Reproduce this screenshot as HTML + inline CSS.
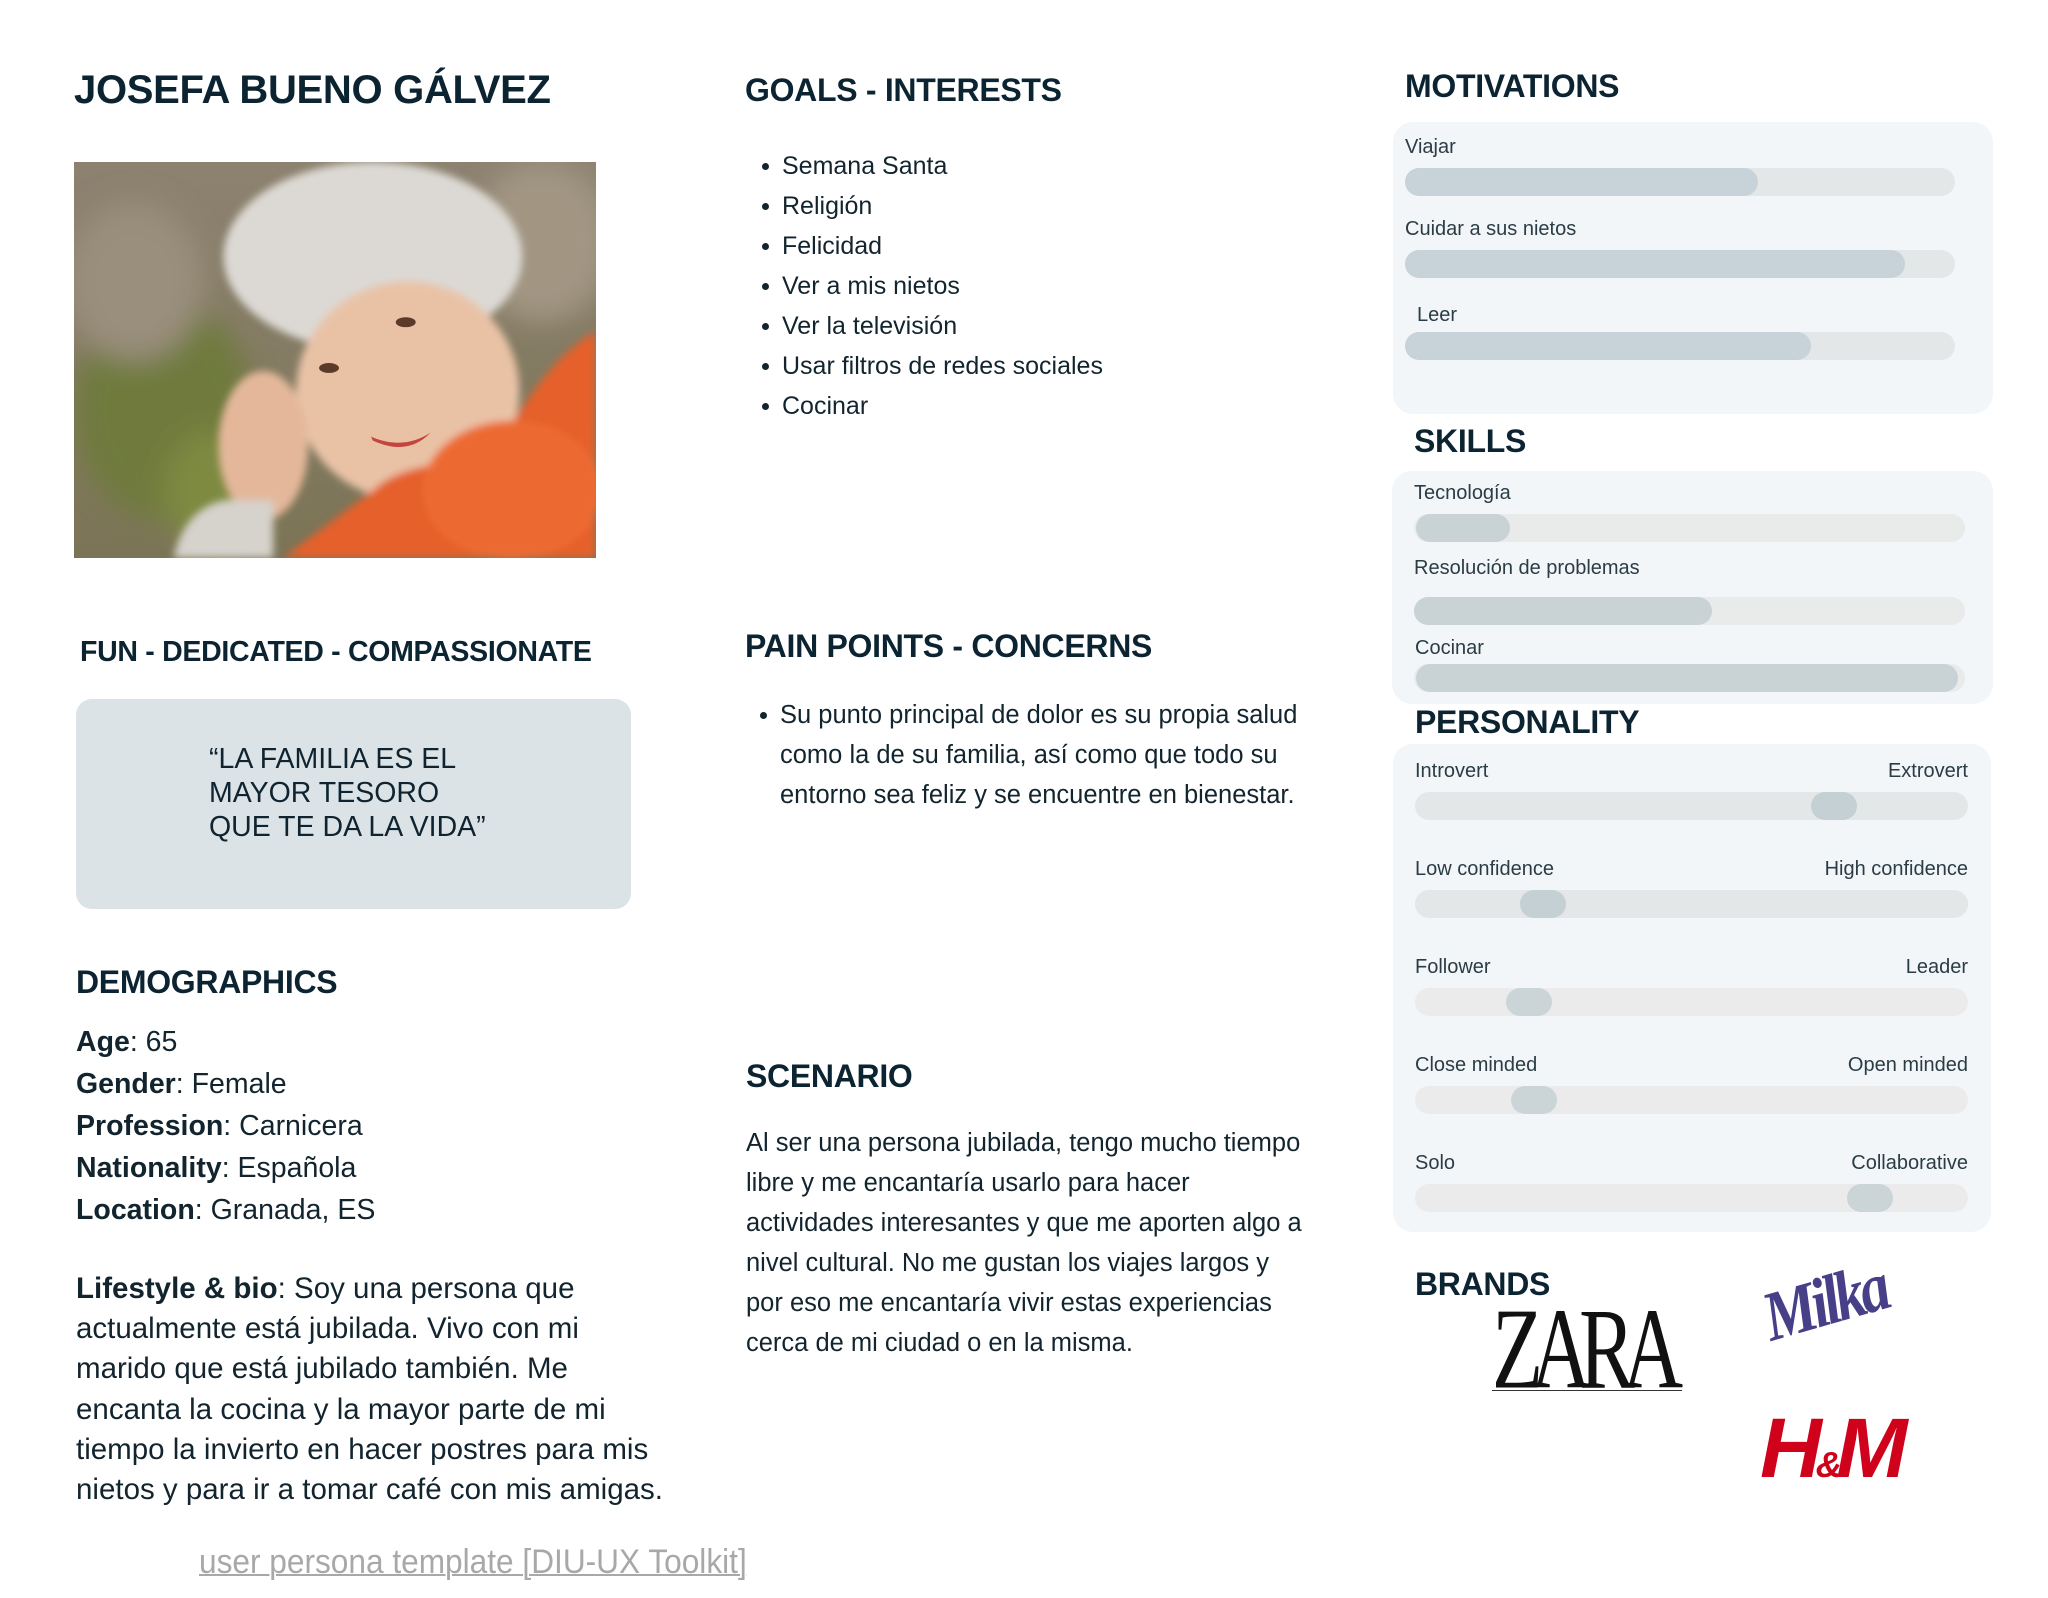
<!DOCTYPE html>
<html><head><meta charset="utf-8">
<style>
*{margin:0;padding:0;box-sizing:border-box}
body{width:2048px;height:1598px;background:#fff;position:relative;overflow:hidden;font-family:"Liberation Sans",Arial,sans-serif;color:#0f2430}
.a{position:absolute;white-space:nowrap}
h1,h2{position:absolute;white-space:nowrap;font-weight:bold;color:#0c2431;letter-spacing:-0.3px}
h1{font-size:40px}
h2{font-size:32px}
.body{font-size:25px;line-height:40px;color:#12242e}
.card{position:absolute;background:#f2f6f9;border-radius:20px}
.lab{position:absolute;font-size:20px;color:#2b3c45;white-space:nowrap;line-height:24px}
.trk{position:absolute;height:28px;border-radius:14px;background:#e3e7e8}
.fill{position:absolute;left:0;top:0;height:28px;border-radius:14px;background:#c7d3d8}
.knob{position:absolute;top:0;width:46px;height:28px;border-radius:14px;background:#c5d0d4}
ul{list-style:none}
.bl{position:relative}
.bl:before{content:"";position:absolute;left:-20px;top:17px;width:7px;height:7px;border-radius:50%;background:#12242e}
</style></head><body>

<h1 style="left:74px;top:68px">JOSEFA BUENO GÁLVEZ</h1>

<svg class="a" style="left:74px;top:162px" width="522" height="396" viewBox="0 0 524 398" preserveAspectRatio="none">
<defs>
<filter id="b1"><feGaussianBlur stdDeviation="14"/></filter>
<filter id="b2"><feGaussianBlur stdDeviation="4"/></filter>
<linearGradient id="bg" x1="0" y1="0" x2="0" y2="1"><stop offset="0" stop-color="#8d8270"/><stop offset="1" stop-color="#7b7456"/></linearGradient>
</defs>
<rect width="524" height="398" fill="url(#bg)"/>
<g filter="url(#b1)">
<ellipse cx="90" cy="250" rx="90" ry="110" fill="#6f7a3c"/>
<ellipse cx="60" cy="120" rx="70" ry="80" fill="#9a8e7c"/>
<ellipse cx="470" cy="80" rx="70" ry="80" fill="#a29683"/>
<ellipse cx="140" cy="330" rx="50" ry="60" fill="#7e8a41"/>
</g>
<g filter="url(#b2)">
<ellipse cx="300" cy="95" rx="150" ry="95" fill="#dcd9d4"/>
<ellipse cx="335" cy="230" rx="112" ry="110" fill="#e9c2a6"/>
<ellipse cx="190" cy="285" rx="45" ry="75" fill="#e4b79a"/>
<path d="M300 330 Q330 300 420 300 Q470 200 524 170 L524 398 L210 398 Z" fill="#e5612c"/>
<path d="M100 398 Q110 350 150 340 L200 340 L200 398Z" fill="#d6d2cc"/>
<ellipse cx="440" cy="330" rx="90" ry="70" fill="#ec6a31"/>
</g>
<path d="M298 276 Q330 290 358 272 Q335 296 300 280Z" fill="#c4443e"/>
<ellipse cx="256" cy="207" rx="10" ry="5" fill="#5a3a28"/>
<ellipse cx="333" cy="161" rx="10" ry="5" fill="#5a3a28"/>
</svg>

<h2 style="left:80px;top:636px;font-size:28.5px">FUN - DEDICATED - COMPASSIONATE</h2>
<div class="a" style="left:76px;top:699px;width:555px;height:210px;background:#dce3e6;border-radius:16px"></div>
<div class="a" style="left:209px;top:742px;font-size:28.5px;line-height:34px;color:#0f2430">“LA FAMILIA ES EL<br>MAYOR TESORO<br>QUE TE DA LA VIDA”</div>

<h2 style="left:76px;top:964px">DEMOGRAPHICS</h2>
<div class="a" style="left:76px;top:1021px;font-size:28.5px;line-height:42px;color:#12242e">
<b>Age</b>: 65<br><b>Gender</b>: Female<br><b>Profession</b>: Carnicera<br><b>Nationality</b>: Española<br><b>Location</b>: Granada, ES</div>
<div class="a" style="left:76px;top:1269px;font-size:29.5px;line-height:40.2px;color:#12242e">
<b>Lifestyle &amp; bio</b>: Soy una persona que<br>actualmente está jubilada. Vivo con mi<br>marido que está jubilado también. Me<br>encanta la cocina y la mayor parte de mi<br>tiempo la invierto en hacer postres para mis<br>nietos y para ir a tomar café con mis amigas.</div>

<div class="a" style="left:199px;top:1542px;font-size:34px;line-height:40px;color:#a8a8a8;text-decoration:underline;text-decoration-thickness:2px;transform:scaleX(0.93);transform-origin:left top">user persona template [DIU-UX Toolkit]</div>

<h2 style="left:745px;top:72px">GOALS - INTERESTS</h2>
<ul class="a body" style="left:782px;top:146px">
<li class="bl">Semana Santa</li><li class="bl">Religión</li><li class="bl">Felicidad</li><li class="bl">Ver a mis nietos</li><li class="bl">Ver la televisión</li><li class="bl">Usar filtros de redes sociales</li><li class="bl">Cocinar</li></ul>

<h2 style="left:745px;top:628px">PAIN POINTS - CONCERNS</h2>
<ul class="a body" style="left:780px;top:695px;font-size:25.5px">
<li class="bl">Su punto principal de dolor es su propia salud<br>como la de su familia, así como que todo su<br>entorno sea feliz y se encuentre en bienestar.</li></ul>

<h2 style="left:746px;top:1058px">SCENARIO</h2>
<div class="a body" style="left:746px;top:1123px;font-size:25.5px">Al ser una persona jubilada, tengo mucho tiempo<br>libre y me encantaría usarlo para hacer<br>actividades interesantes y que me aporten algo a<br>nivel cultural. No me gustan los viajes largos y<br>por eso me encantaría vivir estas experiencias<br>cerca de mi ciudad o en la misma.</div>

<h2 style="left:1405px;top:68px">MOTIVATIONS</h2>
<div class="card" style="left:1393px;top:122px;width:600px;height:292px"></div>
<div class="lab" style="left:1405px;top:135px">Viajar</div>
<div class="trk" style="left:1405px;top:168px;width:550px"><div class="fill" style="width:353px"></div></div>
<div class="lab" style="left:1405px;top:217px">Cuidar a sus nietos</div>
<div class="trk" style="left:1405px;top:250px;width:550px"><div class="fill" style="width:500px"></div></div>
<div class="lab" style="left:1417px;top:303px">Leer</div>
<div class="trk" style="left:1405px;top:332px;width:550px"><div class="fill" style="width:406px"></div></div>

<h2 style="left:1414px;top:423px">SKILLS</h2>
<div class="card" style="left:1392px;top:471px;width:601px;height:233px"></div>
<div class="lab" style="left:1414px;top:481px">Tecnología</div>
<div class="trk" style="left:1414px;top:514px;width:551px;background:#e9eaea"><div class="fill" style="left:2px;width:94px;background:#c9d3d6"></div></div>
<div class="lab" style="left:1414px;top:556px">Resolución de problemas</div>
<div class="trk" style="left:1414px;top:597px;width:551px;background:#e9eaea"><div class="fill" style="width:298px;background:#c9d3d6"></div></div>
<div class="lab" style="left:1415px;top:636px">Cocinar</div>
<div class="trk" style="left:1414px;top:664px;width:551px;background:#e9eaea"><div class="fill" style="left:2px;width:542px;background:#c9d3d6"></div></div>

<h2 style="left:1415px;top:704px">PERSONALITY</h2>
<div class="card" style="left:1393px;top:744px;width:598px;height:488px"></div>
<div class="lab" style="left:1415px;top:759px">Introvert</div><div class="lab" style="right:80px;top:759px">Extrovert</div>
<div class="trk" style="left:1415px;top:792px;width:553px"><div class="knob" style="left:396px"></div></div>
<div class="lab" style="left:1415px;top:857px">Low confidence</div><div class="lab" style="right:80px;top:857px">High confidence</div>
<div class="trk" style="left:1415px;top:890px;width:553px"><div class="knob" style="left:105px"></div></div>
<div class="lab" style="left:1415px;top:955px">Follower</div><div class="lab" style="right:80px;top:955px">Leader</div>
<div class="trk" style="left:1415px;top:988px;width:553px;background:#ebebeb"><div class="knob" style="left:91px;background:#cbd5d8"></div></div>
<div class="lab" style="left:1415px;top:1053px">Close minded</div><div class="lab" style="right:80px;top:1053px">Open minded</div>
<div class="trk" style="left:1415px;top:1086px;width:553px;background:#ebebeb"><div class="knob" style="left:96px;background:#cbd5d8"></div></div>
<div class="lab" style="left:1415px;top:1151px">Solo</div><div class="lab" style="right:80px;top:1151px">Collaborative</div>
<div class="trk" style="left:1415px;top:1184px;width:553px;background:#ebebeb"><div class="knob" style="left:432px;background:#cbd5d8"></div></div>

<h2 style="left:1415px;top:1266px">BRANDS</h2>
<div class="a" style="left:1492px;top:1296px;font-family:'Liberation Serif',serif;font-size:110px;line-height:100px;letter-spacing:-16px;color:#111;transform:scale(0.76,1.05);transform-origin:left top">ZARA</div>
<div class="a" style="left:1492px;top:1390px;width:190px;height:1px;background:#333"></div>
<div class="a" style="left:1765px;top:1270px;font-family:'Liberation Serif',serif;font-style:italic;font-weight:bold;font-size:70px;line-height:100px;color:#473f87;transform:rotate(-16deg) scaleX(0.85);transform-origin:left center;letter-spacing:-5px">Milka</div>
<div class="a" style="left:1760px;top:1406px;font-family:'Liberation Sans',sans-serif;font-style:italic;font-weight:bold;font-size:84px;line-height:84px;color:#d0021b;letter-spacing:-6px;transform:scaleX(1.02);transform-origin:left top">H<span style="font-size:36px">&amp;</span>M</div>

</body></html>
